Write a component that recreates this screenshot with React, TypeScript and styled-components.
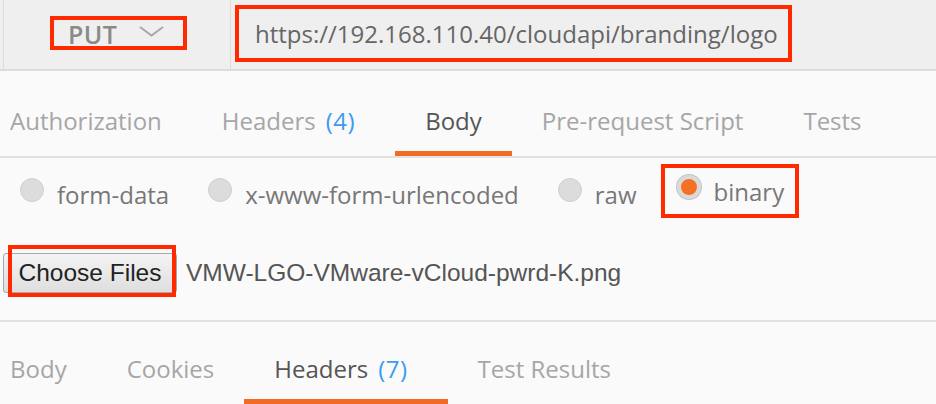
import React from "react";
import styled, { createGlobalStyle } from "styled-components";

const Global = createGlobalStyle`
  html, body {
    margin: 0;
    padding: 0;
    background: #fafafa;
  }
  body {
    font-family: "Open Sans", "Noto Sans", sans-serif;
    width: 936px;
    height: 404px;
    overflow: hidden;
  }
`;

const Page = styled.div`
  display: flex;
  flex-direction: column;
  width: 936px;
  height: 404px;
  background: #fafafa;
`;

const TopBar = styled.div`
  display: flex;
  height: 69px;
  padding-left: 3px;
  background: #efefef;
  border-bottom: 2px solid #dcdcdc;
`;

const MethodCell = styled.div`
  display: flex;
  align-items: center;
  width: 228px;
  padding-left: 46px;
  box-sizing: border-box;
  border-left: 1px solid #dcdcdc;
  border-right: 1px solid #dcdcdc;
`;

const Mark = styled.div<{ $w?: number; $h?: number }>`
  display: flex;
  align-items: center;
  box-sizing: border-box;
  border: 4px solid #ff2a00;
  width: ${(p) => (p.$w ? `${p.$w}px` : "auto")};
  height: ${(p) => (p.$h ? `${p.$h}px` : "auto")};
`;

const MethodBox = styled(Mark)`
  margin-top: -3px;
  padding-left: 14px;
  gap: 22px;
`;

const MethodText = styled.span`
  font-size: 25px;
  font-weight: 600;
  color: #8a8a8a;
  line-height: 1;
  margin-top: 2px;
  letter-spacing: 0.4px;
`;

const UrlCell = styled.div`
  display: flex;
  align-items: center;
  padding-left: 4px;
`;

const UrlBox = styled(Mark)`
  padding-left: 16px;
  margin-top: -3px;
`;

const UrlText = styled.span`
  font-size: 24px;
  color: #666;
`;

const TabRow = styled.div<{ $h: number }>`
  display: flex;
  align-items: stretch;
  height: ${(p) => p.$h}px;
  margin-left: -20px;
`;

const TabBar = styled.div<{ $h: number }>`
  height: ${(p) => p.$h}px;
  border-bottom: 2px solid #e2e2e2;
  box-sizing: border-box;
  overflow: hidden;
`;

const Tab = styled.div<{ $active?: boolean; $extra?: number; $top?: number }>`
  display: flex;
  align-items: center;
  padding: ${(p) => `${p.$top ?? 14}px ${30 + (p.$extra || 0)}px 0 30px`};
  font-size: 24px;
  color: ${(p) => (p.$active ? "#555" : "#a6a6a6")};
  box-shadow: ${(p) => (p.$active ? "inset 0 -5px 0 #f26b24" : "none")};
  white-space: nowrap;
`;

const Count = styled.span`
  color: #3d9af2;
  margin-left: 10px;
  letter-spacing: 0.5px;
`;

const RadioRow = styled.div`
  display: flex;
  align-items: center;
  height: 84px;
  padding: 0 0 12px 20px;
  box-sizing: border-box;
  gap: 39px;
`;

const RadioItem = styled.label`
  display: flex;
  align-items: center;
  gap: 13px;
  font-size: 24px;
  color: #777;
`;

const RadioCircle = styled.span<{ $on?: boolean }>`
  width: 24px;
  height: 24px;
  border-radius: 50%;
  box-sizing: border-box;
  margin-top: -8px;
  background: ${(p) => (p.$on ? "#f47023" : "#dcdcdc")};
  border: ${(p) => (p.$on ? "4px solid #dadada" : "1px solid #cfcfcf")};
  box-shadow: ${(p) => (p.$on ? "0 0 0 1px #c4c4c4" : "none")};
`;

const BinaryBox = styled(Mark)`
  padding: 0 11px 0 12px;
  height: 54px;
  margin-left: -15px;
  margin-top: -6px;
`;

const FileRow = styled.div`
  display: flex;
  align-items: center;
  height: 82px;
  padding-left: 3px;
  gap: 9px;
  border-bottom: 2px solid #e2e2e2;
  box-sizing: border-box;
  margin-top: -2px;
`;

const ButtonWrap = styled.div`
  position: relative;
  display: flex;
  margin-top: -14px;
  &::after {
    content: "";
    position: absolute;
    left: 5px;
    right: 1px;
    top: -8px;
    bottom: -4px;
    border: 4px solid #ff2a00;
    pointer-events: none;
  }
`;

const FileButton = styled.button`
  font-family: "Liberation Sans", Arial, sans-serif;
  font-size: 24.5px;
  color: #222;
  height: 40px;
  width: 174px;
  padding: 0;
  border: 1px solid #a9a9a9;
  border-radius: 3px;
  background: linear-gradient(#f4f4f4, #dedede);
`;

const FileName = styled.span`
  font-family: "Liberation Sans", Arial, sans-serif;
  font-size: 24.5px;
  color: #555;
  margin-top: -14px;
`;

const Chevron = () => (
  <svg width="25" height="11" viewBox="0 0 25 11" style={{ marginTop: -4 }}>
    <path d="M1 1 L12.5 9.5 L24 1" fill="none" stroke="#a8a8a8" strokeWidth="2" />
  </svg>
);

export default function App() {
  return (
    <Page>
      <Global />
      <TopBar>
        <MethodCell>
          <MethodBox $w={137} $h={34}>
            <MethodText>PUT</MethodText>
            <Chevron />
          </MethodBox>
        </MethodCell>
        <UrlCell>
          <UrlBox $w={557} $h={57}>
            <UrlText>https://192.168.110.40/cloudapi/branding/logo</UrlText>
          </UrlBox>
        </UrlCell>
      </TopBar>

      <TabBar $h={87}>
        <TabRow $h={85}>
          <Tab>Authorization</Tab>
          <Tab $extra={10}>
            Headers<Count>(4)</Count>
          </Tab>
          <Tab $active>Body</Tab>
          <Tab>Pre-request Script</Tab>
          <Tab>Tests</Tab>
        </TabRow>
      </TabBar>

      <RadioRow>
        <RadioItem>
          <RadioCircle />
          form-data
        </RadioItem>
        <RadioItem>
          <RadioCircle />
          x-www-form-urlencoded
        </RadioItem>
        <RadioItem>
          <RadioCircle />
          raw
        </RadioItem>
        <BinaryBox>
          <RadioItem>
            <RadioCircle $on />
            binary
          </RadioItem>
        </BinaryBox>
      </RadioRow>

      <FileRow>
        <ButtonWrap>
          <FileButton>Choose Files</FileButton>
        </ButtonWrap>
        <FileName>VMW-LGO-VMware-vCloud-pwrd-K.png</FileName>
      </FileRow>

      <TabRow $h={82}>
        <Tab $top={10}>Body</Tab>
        <Tab $top={10}>Cookies</Tab>
        <Tab $top={10} $active $extra={10}>
          Headers<Count>(7)</Count>
        </Tab>
        <Tab $top={10}>Test Results</Tab>
      </TabRow>
    </Page>
  );
}
